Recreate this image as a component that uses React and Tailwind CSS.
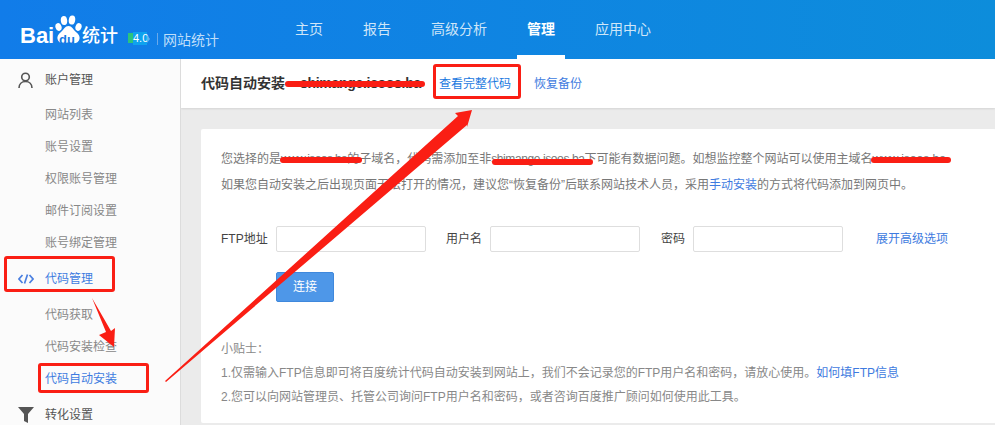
const FONT = "font-['Liberation_Sans','Noto_Sans_CJK_SC',sans-serif]";

function Logo() {
  return (
    <div className="flex items-center pl-[20px] w-[285px] h-full">
      <span className="text-white font-bold text-[22px] leading-none mt-[13px] w-[35px]">Bai</span>
      <div className="relative w-[27px] h-[30px] mt-[1px] shrink-0">
        <svg viewBox="0 0 27 30" className="w-[27px] h-[30px]">
          <ellipse cx="9" cy="5.500" rx="3.200" ry="4.600" fill="#fff" transform="rotate(-6 9 5.500)" />
          <ellipse cx="17" cy="5" rx="3.200" ry="4.600" fill="#fff" transform="rotate(8 17 5)" />
          <ellipse cx="3.500" cy="12" rx="3" ry="4" fill="#fff" transform="rotate(-18 3.500 12)" />
          <ellipse cx="23.500" cy="12" rx="3" ry="4" fill="#fff" transform="rotate(18 23.500 12)" />
          <path d="M13.500 11c3.500 0 4.500 3.500 7.500 6 3 2.500 4 4.500 3.500 7-.6 3-3.500 4.700-6.500 4.300-1.800-.3-3.300-.8-4.500-.8s-2.700.5-4.500.8c-3 .4-5.900-1.300-6.500-4.300-.5-2.500.5-4.500 3.500-7 3-2.500 4-6 7.500-6z" fill="#fff" />
        </svg>
        <span className="absolute left-[4px] top-[18px] text-[#1279e3] text-[13px] font-bold leading-[13px]">du</span>
      </div>
      <span className="text-white text-[18px] leading-none font-medium mt-[13px] w-[36px] shrink-0">统计</span>
      <div className="relative ml-[10px] mt-[18px] w-[22px] h-[13px] shrink-0">
        <div className="absolute left-0 top-[1px] w-[6px] h-[10px] bg-[#2bc47e]" />
        <div className="absolute left-[5px] top-0 w-[14px] h-[13px] bg-[#0fa2ee] text-white text-[11px] leading-[13px] text-center">4.0</div>
        <div className="absolute left-[19px] top-[3px] w-0 h-0 border-y-[4px] border-y-transparent border-l-[3px] border-l-[#5cb6ee]" />
      </div>
      <div className="w-px h-[12px] bg-[#6aa9ea] ml-[7px] mt-[19px] shrink-0" />
      <span className="text-[#bfdef9] text-[14px] leading-none ml-[5px] mt-[21px] whitespace-nowrap">网站统计</span>
    </div>
  );
}

function TopNav() {
  const items = ["主页", "报告", "高级分析", "管理", "应用中心"];
  return (
    <div className="flex gap-[20px] h-full">
      {items.map((t) => (
        <div
          key={t}
          className={`px-[10px] h-full flex items-center pt-[3px] text-[14px] border-b-4 ${
            t === "管理" ? "text-white font-bold border-white" : "text-[#cfe6f8] border-transparent"
          }`}
        >
          {t}
        </div>
      ))}
    </div>
  );
}

function UserIcon() {
  return (
    <svg viewBox="0 0 15 16" className="w-[15px] h-[16px]" fill="none" stroke="#555" strokeWidth="1.600">
      <circle cx="7.500" cy="5" r="3.800" />
      <path d="M1 16c0-4 2.800-6.500 6.500-6.500S14 12 14 16" />
    </svg>
  );
}

function CodeIcon() {
  return (
    <svg viewBox="0 0 16 10" className="w-[16px] h-[10px]" fill="none" stroke="#4a7fe0" strokeWidth="1.700">
      <path d="M4.500 1 1 5l3.500 4M11.500 1 15 5l-3.500 4M9.500 .5l-3 9" />
    </svg>
  );
}

function FunnelIcon() {
  return (
    <svg viewBox="0 0 16 16" className="w-[16px] h-[16px]">
      <path d="M0 0h16L10 7v9l-4-2V7z" fill="#555" />
    </svg>
  );
}

function MenuHead({ icon, label, active, first }) {
  return (
    <div className={`flex items-center h-[40px] ${first ? "pt-px" : ""}`}>
      <div className="w-[45px] pl-[18px] shrink-0">{icon}</div>
      <span className={active ? "text-[#3e7be0]" : "text-[#555]"}>{label}</span>
    </div>
  );
}

function MenuItem({ label, active }) {
  return (
    <div className={`h-[32px] leading-[32px] pl-[45px] ${active ? "text-[#3e7be0]" : "text-[#888]"}`}>{label}</div>
  );
}

function Sidebar() {
  return (
    <div className="w-[181px] shrink-0 bg-[#fbfbfb] border-r border-[#dcdcdc] text-[12px] overflow-hidden">
      <MenuHead first icon={<UserIcon />} label="账户管理" />
      <MenuItem label="网站列表" />
      <MenuItem label="账号设置" />
      <MenuItem label="权限账号管理" />
      <MenuItem label="邮件订阅设置" />
      <MenuItem label="账号绑定管理" />
      <MenuHead active icon={<CodeIcon />} label="代码管理" />
      <MenuItem label="代码获取" />
      <MenuItem label="代码安装检查" />
      <MenuItem active label="代码自动安装" />
      <MenuHead icon={<FunnelIcon />} label="转化设置" />
    </div>
  );
}

function Field({ label, labelW, inputW }) {
  return (
    <div className="flex items-center">
      <span className={`${labelW} text-[#444]`}>{label}</span>
      <div className={`${inputW} h-[26px] bg-white border border-[#dedede] rounded-[2px]`} />
    </div>
  );
}

function Card() {
  return (
    <div className="ml-[20px] mr-[-1px] mt-[21px] h-[294px] bg-white rounded-[2px] pl-[20px] pt-[17px] text-[12px] text-[#777]">
      <p className="leading-[26px] whitespace-nowrap">
        您选择的是<span className="tracking-[-0.6px]">www.isoos.ba</span>的子域名，代码需添加至非<span className="tracking-[-0.4px]">shimange.isoos.ba</span>下可能有数据问题。如想监控整个网站可以使用主域名www.isoos.ba
      </p>
      <p className="leading-[26px] whitespace-nowrap">
        如果您自动安装之后出现页面无法打开的情况，建议您“恢复备份”后联系网站技术人员，采用<span className="text-[#3e7be0]">手动安装</span>的方式将代码添加到网页中。
      </p>
      <div className="flex items-center mt-[28px]">
        <Field label="FTP地址" labelW="w-[55px]" inputW="w-[150px]" />
        <div className="w-[20px]" />
        <Field label="用户名" labelW="w-[44px]" inputW="w-[150px]" />
        <div className="w-[21px]" />
        <Field label="密码" labelW="w-[32px]" inputW="w-[150px]" />
        <span className="ml-[33px] text-[#3e7be0]">展开高级选项</span>
      </div>
      <button className="block ml-[55px] mt-[20px] w-[58px] h-[30px] bg-[#4e97e8] border border-[#3f88dc] rounded-[2px] text-white text-[12px]">
        连接
      </button>
      <div className="mt-[35px] text-[#888] leading-[24px] whitespace-nowrap">
        <p>小贴士：</p>
        <p>
          1.仅需输入FTP信息即可将百度统计代码自动安装到网站上，我们不会记录您的FTP用户名和密码，请放心使用。
          <span className="text-[#3e7be0]">如何填FTP信息</span>
        </p>
        <p>2.您可以向网站管理员、托管公司询问FTP用户名和密码，或者咨询百度推广顾问如何使用此工具。</p>
      </div>
    </div>
  );
}

function Main() {
  return (
    <div className="flex-1 min-w-0 bg-[#ebebeb] overflow-hidden">
      <div className="h-[49px] bg-white shadow-[0_1px_2px_rgba(0,0,0,0.1)] flex items-center pl-[20px] text-[12px]">
        <span className="font-bold text-[14px] text-[#333]">代码自动安装</span>
        <span className="ml-[15px] w-[124px] font-bold text-[14px] tracking-[-0.3px] text-[#333] whitespace-nowrap">shimange.isoos.ba</span>
        <span className="ml-[15px] text-[#1a78e0]">查看完整代码</span>
        <span className="ml-[23px] text-[#3e7be0]">恢复备份</span>
      </div>
      <Card />
    </div>
  );
}

// hand-drawn annotations sitting on top of the screenshot
function Annotations() {
  return (
    <div className="absolute inset-0 pointer-events-none">
      <div className="absolute left-[4px] top-[256px] w-[111px] h-[36px] border-[3px] border-[#fa1e14] rounded-[3px]" />
      <div className="absolute left-[38px] top-[363px] w-[111px] h-[30px] border-[3px] border-[#fa1e14] rounded-[3px]" />
      <div className="absolute left-[433px] top-[64px] w-[88px] h-[35px] border-[3px] border-[#fa1e14] rounded-[3px]" />
      <svg viewBox="0 0 995 425" className="absolute inset-0 w-[995px] h-[425px]">
        <g stroke="#fa1e14" strokeLinecap="round" fill="none">
          <path d="M288 84 422 84" strokeWidth="6" />
          <path d="M283 160 359 160" strokeWidth="6" />
          <path d="M495 162 590 162" strokeWidth="6" />
          <path d="M874 160 948 160" strokeWidth="6" />
        </g>
        <path d="M472 110 455 113 458 116 165 381 166 382 467 125 467 127z" fill="#fa1e14" />
        <path d="M92 298 111 331 115 328 114 347 99 335 106 332z" fill="#fa1e14" />
      </svg>
    </div>
  );
}

export default function App() {
  return (
    <div className={`relative w-[995px] h-[425px] overflow-hidden flex flex-col ${FONT}`}>
      <div className="h-[59px] shrink-0 bg-[linear-gradient(90deg,#117ce9,#0d8ddb)] flex">
        <Logo />
        <TopNav />
      </div>
      <div className="flex flex-1 min-h-0">
        <Sidebar />
        <Main />
      </div>
      <Annotations />
    </div>
  );
}
